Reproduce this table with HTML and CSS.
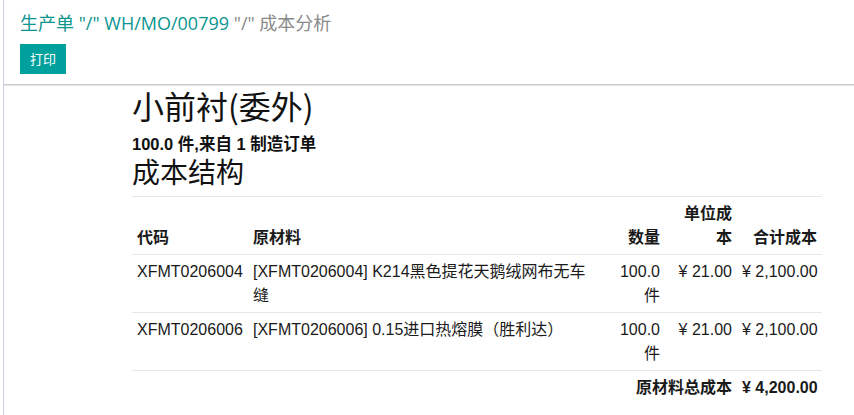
FILE: index.html
```html
<!DOCTYPE html>
<html lang="zh">
<head>
<meta charset="utf-8">
<title>成本分析</title>
<link rel="stylesheet" href="styles.css">
</head>
<body>
<div class="app">
  <div class="control-panel">
    <div class="breadcrumb">
      <span class="crumb-link">生产单 "/" WH/MO/00799</span>
      <span class="crumb-active">"/" 成本分析</span>
    </div>
    <div class="buttons">
      <button class="btn-primary" type="button">打印</button>
    </div>
  </div>
  <div class="report">
    <h2 class="product">小前衬(委外)</h2>
    <div class="summary">100.0 件,来自 1 制造订单</div>
    <h3 class="section">成本结构</h3>
    <table class="cost-table">
      <colgroup>
        <col class="c-code">
        <col class="c-name">
        <col class="c-qty">
        <col class="c-unit">
        <col class="c-total">
      </colgroup>
      <thead>
        <tr>
          <th>代码</th>
          <th>原材料</th>
          <th class="num">数量</th>
          <th class="num">单位成本</th>
          <th class="num">合计成本</th>
        </tr>
      </thead>
      <tbody>
        <tr>
          <td>XFMT0206004</td>
          <td>[XFMT0206004] K214黑色提花天鹅绒网布无车缝</td>
          <td class="num">100.0 件</td>
          <td class="num money">¥&nbsp;21.00</td>
          <td class="num money">¥&nbsp;2,100.00</td>
        </tr>
        <tr>
          <td>XFMT0206006</td>
          <td>[XFMT0206006] 0.15进口热熔膜（胜利达）</td>
          <td class="num">100.0 件</td>
          <td class="num money">¥&nbsp;21.00</td>
          <td class="num money">¥&nbsp;2,100.00</td>
        </tr>
      </tbody>
      <tfoot>
        <tr>
          <td colspan="4" class="num total-label">原材料总成本</td>
          <td class="num money total-value">¥&nbsp;4,200.00</td>
        </tr>
      </tfoot>
    </table>
  </div>
</div>
</body>
</html>
```
FILE: styles.css
```css
html, body {
  margin: 0;
  padding: 0;
  background: #fff;
}

body {
  font-family: "Liberation Sans", "Noto Sans CJK SC", sans-serif;
  color: #222;
  width: 854px;
  height: 415px;
  overflow: hidden;
}

.app {
  margin-left: 3px;
  border-left: 1px solid #c9d2de;
  height: 415px;
}

.control-panel {
  padding: 10px 0 10px 16px;
  border-bottom: 1px solid #cfcfcf;
  box-shadow: 0 1px 0 #e4e4e4;
  height: 64px;
}

.breadcrumb {
  font-family: "Open Sans", "Noto Sans CJK SC", sans-serif;
  font-size: 18px;
  line-height: 27px;
  white-space: nowrap;
}

.crumb-link {
  color: #0a958f;
}

.crumb-active {
  color: #8a8a8a;
}

.buttons {
  margin-top: 7px;
}

.btn-primary {
  font-family: "Noto Sans CJK SC", sans-serif;
  font-size: 13px;
  line-height: 20px;
  padding: 5px 10px;
  border: 0;
  border-radius: 0;
  background: #00a09d;
  color: #fff;
  display: block;
}

.report {
  padding: 0 32px 0 128px;
}

.product {
  font-family: "Noto Sans CJK SC", sans-serif;
  font-weight: normal;
  font-size: 32px;
  line-height: 36px;
  margin: 2px 0 0;
  color: #111;
}

.summary {
  font-weight: bold;
  font-size: 16.5px;
  line-height: 24px;
  margin-top: 9px;
  margin-bottom: -1px;
  color: #111;
}

.section {
  font-family: "Noto Sans CJK SC", sans-serif;
  font-weight: normal;
  font-size: 28px;
  line-height: 32px;
  margin: 0 0 9px;
  color: #111;
}

.cost-table {
  width: 690px;
  table-layout: fixed;
  border-collapse: collapse;
  font-size: 16px;
  line-height: 24px;
  color: #1a1a1a;
}

.c-code { width: 116px; }
.c-name { width: 348px; }
.c-qty { width: 69px; }
.c-unit { width: 72px; }
.c-total { width: 85px; }

.cost-table th,
.cost-table td {
  padding: 5px 5px 4px;
  text-align: left;
  vertical-align: top;
  border-top: 1px solid #e6e6e6;
}

.cost-table th {
  font-weight: bold;
  vertical-align: bottom;
}

.cost-table .num {
  text-align: right;
}

.cost-table .money {
  white-space: nowrap;
}

.total-label,
.total-value {
  font-weight: bold;
}
```
